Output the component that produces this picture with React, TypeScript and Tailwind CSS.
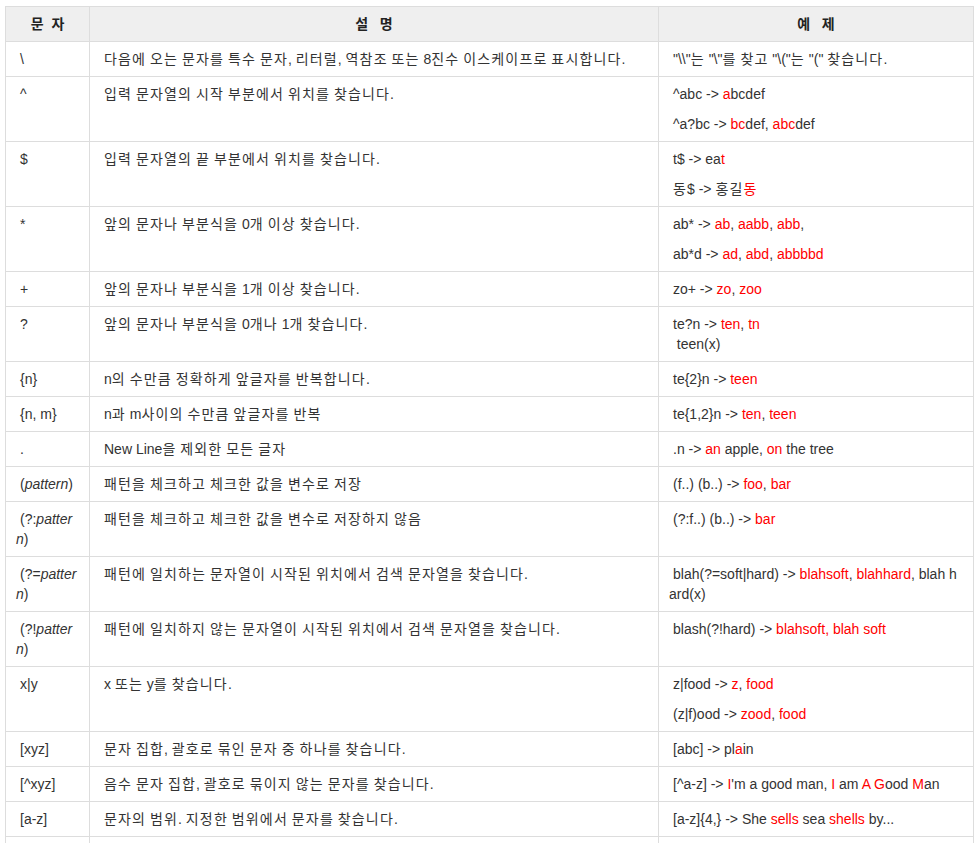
import React from 'react';

const R: React.FC<{ children: React.ReactNode }> = ({ children }) => (
  <span className="text-[#ff0000]">{children}</span>
);

// Hangul runs get a little extra tracking so they take the width of the original font
const K = (s: string): React.ReactNode =>
  s.split(/([\uac00-\ud7a3]+)/).map((part, i) =>
    /[\uac00-\ud7a3]/.test(part) ? (
      <span key={i} className="tracking-[1.15px]">{part}</span>
    ) : (
      part
    )
  );

type Row = {
  ch: React.ReactNode;
  desc: string;
  ex: React.ReactNode[];
};

const rows: Row[] = [
  {
    ch: '\\',
    desc: '다음에 오는 문자를 특수 문자, 리터럴, 역참조 또는 8진수 이스케이프로 표시합니다.',
    ex: [K('"\\\\"는 "\\"를 찾고 "\\("는 "(" 찾습니다.')],
  },
  {
    ch: '^',
    desc: '입력 문자열의 시작 부분에서 위치를 찾습니다.',
    ex: [
      <>^abc -&gt; <R>a</R>bcdef</>,
      <>^a?bc -&gt; <R>bc</R>def, <R>abc</R>def</>,
    ],
  },
  {
    ch: '$',
    desc: '입력 문자열의 끝 부분에서 위치를 찾습니다.',
    ex: [
      <>t$ -&gt; ea<R>t</R></>,
      <>{K('동')}$ -&gt; {K('홍길')}<R>{K('동')}</R></>,
    ],
  },
  {
    ch: '*',
    desc: '앞의 문자나 부분식을 0개 이상 찾습니다.',
    ex: [
      <>ab* -&gt; <R>ab</R>, <R>aabb</R>, <R>abb</R>,</>,
      <>ab*d -&gt; <R>ad</R>, <R>abd</R>, <R>abbbbd</R></>,
    ],
  },
  {
    ch: '+',
    desc: '앞의 문자나 부분식을 1개 이상 찾습니다.',
    ex: [<>zo+ -&gt; <R>zo</R>, <R>zoo</R></>],
  },
  {
    ch: '?',
    desc: '앞의 문자나 부분식을 0개나 1개 찾습니다.',
    ex: [
      <>
        te?n -&gt; <R>ten</R>, <R>tn</R>
        <br />
        {'\u00a0\u00a0teen(x)'}
      </>,
    ],
  },
  {
    ch: '{n}',
    desc: 'n의 수만큼 정확하게 앞글자를 반복합니다.',
    ex: [<>te{'{2}'}n -&gt; <R>teen</R></>],
  },
  {
    ch: '{n, m}',
    desc: 'n과 m사이의 수만큼 앞글자를 반복',
    ex: [<>te{'{1,2}'}n -&gt; <R>ten</R>, <R>teen</R></>],
  },
  {
    ch: '.',
    desc: 'New Line을 제외한 모든 글자',
    ex: [<>.n -&gt; <R>an</R> apple, <R>on</R> the tree</>],
  },
  {
    ch: <>(<i>pattern</i>)</>,
    desc: '패턴을 체크하고 체크한 값을 변수로 저장',
    ex: [<>(f..) (b..) -&gt; <R>foo</R>, <R>bar</R></>],
  },
  {
    ch: <>(?:<i>pattern</i>)</>,
    desc: '패턴을 체크하고 체크한 값을 변수로 저장하지 않음',
    ex: [<>(?:f..) (b..) -&gt; <R>bar</R></>],
  },
  {
    ch: <>(?=<i>pattern</i>)</>,
    desc: '패턴에 일치하는 문자열이 시작된 위치에서 검색 문자열을 찾습니다.',
    ex: [<>blah(?=soft|hard) -&gt; <R>blahsoft</R>, <R>blahhard</R>, blah hard(x)</>],
  },
  {
    ch: <>(?!<i>pattern</i>)</>,
    desc: '패턴에 일치하지 않는 문자열이 시작된 위치에서 검색 문자열을 찾습니다.',
    ex: [<>blash(?!hard) -&gt; <R>blahsoft, blah soft</R></>],
  },
  {
    ch: 'x|y',
    desc: 'x 또는 y를 찾습니다.',
    ex: [
      <>z|food -&gt; <R>z</R>, <R>food</R></>,
      <>(z|f)ood -&gt; <R>zood</R>, <R>food</R></>,
    ],
  },
  {
    ch: '[xyz]',
    desc: '문자 집합, 괄호로 묶인 문자 중 하나를 찾습니다.',
    ex: [<>[abc] -&gt; pl<R>a</R>in</>],
  },
  {
    ch: '[^xyz]',
    desc: '음수 문자 집합, 괄호로 묶이지 않는 문자를 찾습니다.',
    ex: [<>[^a-z] -&gt; <R>I</R>'m a good man, <R>I</R> am <R>A G</R>ood <R>M</R>an</>],
  },
  {
    ch: '[a-z]',
    desc: '문자의 범위. 지정한 범위에서 문자를 찾습니다.',
    ex: [<>[a-z]{'{4,}'} -&gt; She <R>sells</R> sea <R>shells</R> by...</>],
  },
  {
    ch: '[^a-z]',
    desc: '음수 문자 범위. 지정한 범위에 없는 문자를 찾습니다.',
    ex: [<>[^a-z] -&gt; <R>123</R>abc</>],
  },
];

const cell = 'border border-[#dddddd] pt-[7px] pb-[7px] px-[10px] align-top indent-[4px] break-all';
const head = 'border border-[#dddddd] bg-[#efefef] py-[7px] px-[10px] text-center font-bold text-[#222222]';

export default function App() {
  return (
    <div
      className="h-[843px] overflow-hidden bg-white pt-[6px] pl-[5px] text-[14px] leading-[20px] text-[#333333]"
      style={{ fontFamily: '"Liberation Sans", "Noto Sans CJK KR", sans-serif' }}
    >
      <table className="w-[968px] table-fixed border-collapse">
        <colgroup>
          <col className="w-[84px]" />
          <col className="w-[569px]" />
          <col className="w-[315px]" />
        </colgroup>
        <thead>
          <tr>
            <th className={head}>{'문\u00a0\u00a0자'}</th>
            <th className={head}>{'설\u00a0\u00a0\u00a0명'}</th>
            <th className={head}>{'예\u00a0\u00a0\u00a0제'}</th>
          </tr>
        </thead>
        <tbody>
          {rows.map((r, i) => (
            <tr key={i}>
              <td className={cell}>{r.ch}</td>
              <td className={cell}>{K(r.desc)}</td>
              <td className={cell}>
                <div className="flex flex-col gap-[10px]">
                  {r.ex.map((e, j) => (
                    <p key={j} className="indent-[4px]">{e}</p>
                  ))}
                </div>
              </td>
            </tr>
          ))}
        </tbody>
      </table>
    </div>
  );
}
